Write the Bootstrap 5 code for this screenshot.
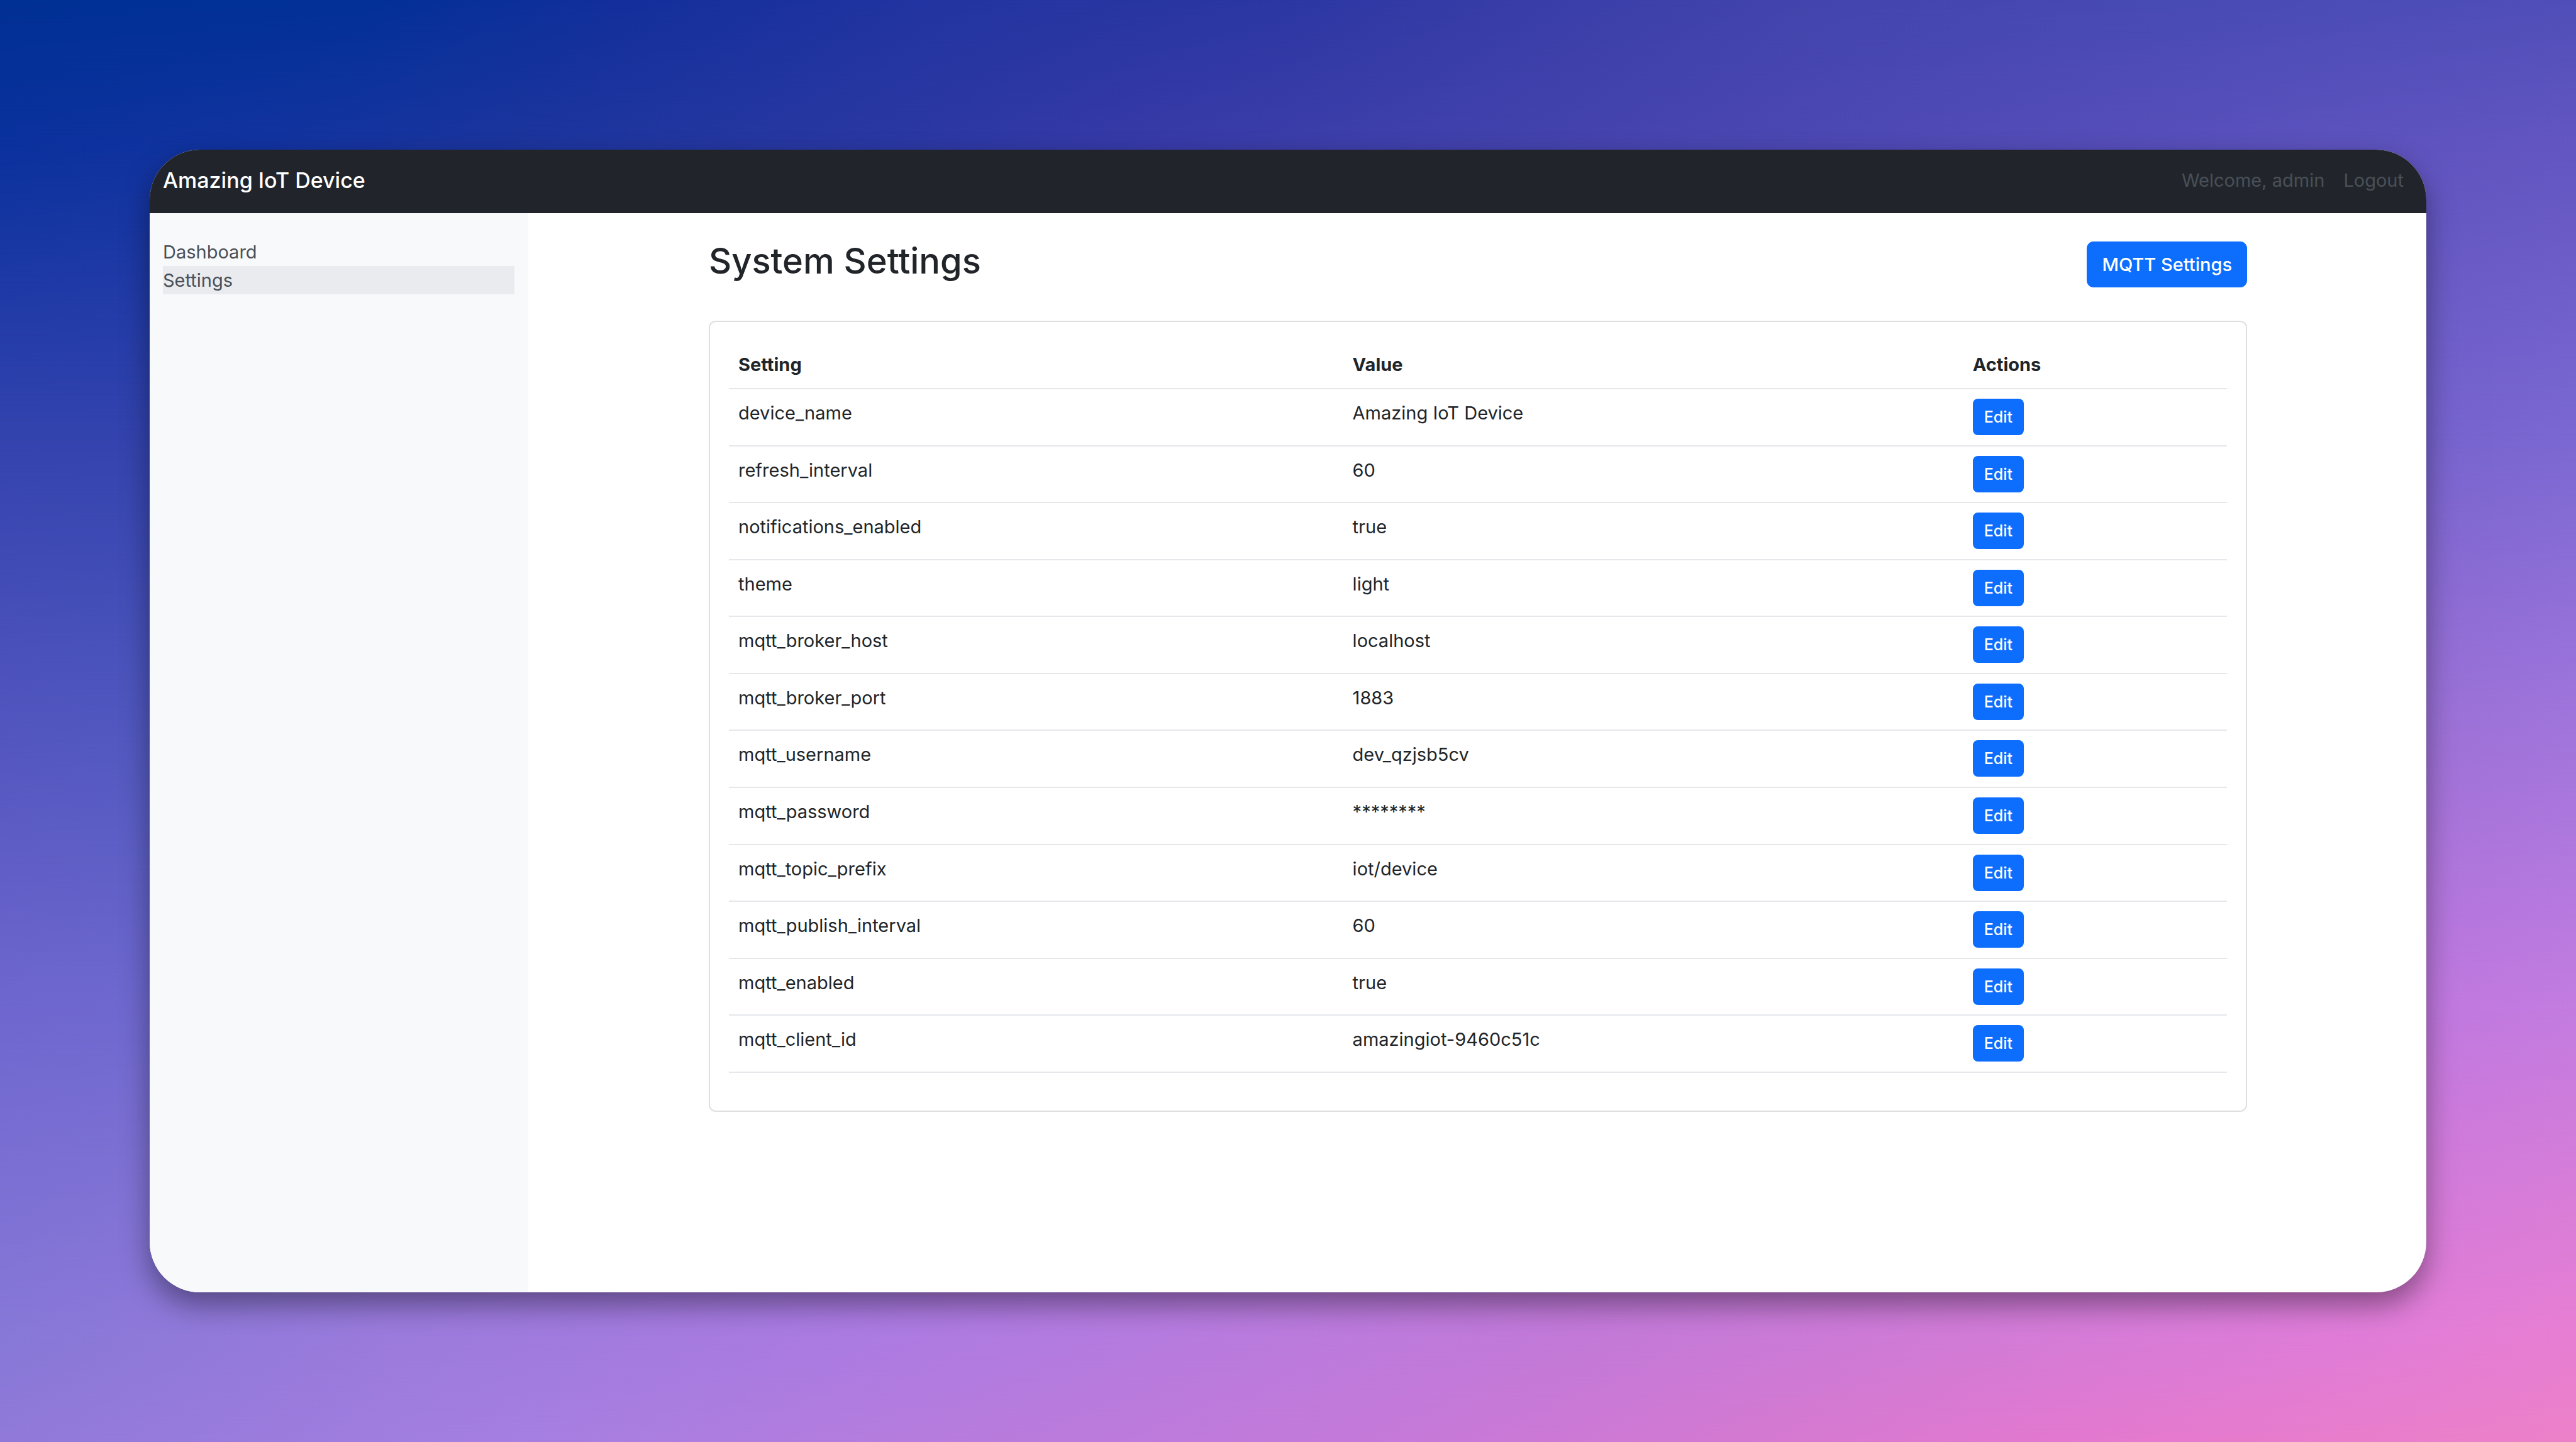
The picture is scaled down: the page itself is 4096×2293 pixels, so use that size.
<!DOCTYPE html>
<html lang="en">
<head>
<meta charset="utf-8">
<meta name="viewport" content="width=device-width, initial-scale=1">
<title>System Settings - Amazing IoT Device</title>
<link href="https://cdn.jsdelivr.net/npm/bootstrap@5.3.0/dist/css/bootstrap.min.css" rel="stylesheet">
<style>
:root { --bs-body-font-family: Inter, "Liberation Sans", sans-serif; }
body { font-family: Inter, "Liberation Sans", sans-serif; font-size: 29px; line-height: 45px; }

/* wallpaper: rows of colour, each faded into the next from top to bottom */
.stage { min-height: 100vh; background: #3a3ca8; }
.stage > * { grid-area: 1 / 1; }
.wash-0 { background: linear-gradient(90deg, #003094 0%, #023097 14%, #132f9b 24%, #2234a0 36%, #2c37a3 50%, #3a3ea8 60%, #4345ad 70%, #494bb5 85%, #504fb8 100%); }
.wash-1 { background: linear-gradient(90deg, #0a319d 0%, #1233a0 10%, #1c359d 20%, #2b38a3 35%, #373aa7 44%, #4443ad 60%, #504ab5 75%, #5c52bd 90%, #6356c2 100%);
  mask-image: linear-gradient(transparent 0%, #000 10%); -webkit-mask-image: linear-gradient(transparent 0%, #000 10%); }
.wash-2 { background: linear-gradient(90deg, #3343ae 0%, #3343ae 6%, #7663cd 94%, #7b68d2 100%);
  mask-image: linear-gradient(transparent 10%, #000 30%); -webkit-mask-image: linear-gradient(transparent 10%, #000 30%); }
.wash-3 { background: linear-gradient(90deg, #5255be 0%, #5058bf 6%, #9b71d6 94%, #a075dc 100%);
  mask-image: linear-gradient(transparent 30%, #000 50%); -webkit-mask-image: linear-gradient(transparent 30%, #000 50%); }
.wash-4 { background: linear-gradient(90deg, #6f67cf 0%, #6f69cf 6%, #c078df 94%, #c37ce0 100%);
  mask-image: linear-gradient(transparent 50%, #000 70%); -webkit-mask-image: linear-gradient(transparent 50%, #000 70%); }
.wash-5 { background: linear-gradient(90deg, #8778d7 0%, #9b7bdc 15%, #ac7be2 33%, #bb7bdd 50%, #c279d8 60%, #d07bd6 75%, #df7cd8 90%, #e87ed2 100%);
  mask-image: linear-gradient(transparent 70%, #000 93%); -webkit-mask-image: linear-gradient(transparent 70%, #000 93%); }
.wash-6 { background: linear-gradient(90deg, #9079d9 0%, #a57fe1 20%, #b57cdd 35%, #c679d8 55%, #d679d0 70%, #e378cf 80%, #ec81c8 100%);
  mask-image: linear-gradient(transparent 93%, #000 100%); -webkit-mask-image: linear-gradient(transparent 93%, #000 100%); }

.app-window { margin: 238px; border-radius: 80px; background: #fff; box-shadow: 0 20px 46px rgba(0, 0, 0, .4); }
.app-bar { min-height: 101px; padding: 0 36px 4px 21px; background: #21252b; }
.app-bar .navbar-brand { font-size: 34px; font-weight: 500; padding: 0; margin: 0; line-height: 56px; }
.app-bar .nav-link { color: #495057; }
.app-links { gap: 30px; }
.app-side { flex: 0 0 602px; padding: 39px 22px 0 21px; background: #f8f9fb; }
.app-side .nav-link { color: #495057; }
.app-side .nav-link.active { background: #eaebef; }
.page-box { max-width: 2492px; padding: 45px 22px 0 24px; }
.page-head { height: 126px; }
.page-head h1 { font-size: 56px; line-height: 62px; font-weight: 500; }
.btn { font-size: 29px; line-height: 45px; font-weight: 500; padding: 12px 22px; border-width: 2px; border-radius: 11px; background: #0d6efd; }
.card { border: 2px solid #dfdfdf; border-radius: 11px; }
.card-body { padding: 30px; }
.settings-table { height: 1164px; margin-bottom: 30px; --bs-table-color: #212529; }
.settings-table > :not(caption) > * > * { padding: 15px; border-bottom: 2px solid #e5e7eb; }
.settings-table .btn { font-size: 25px; line-height: 38px; padding: 8px 16px; border-radius: 8px; display: block; }
.col-key { width: 41%; }
.col-value { width: 41.4%; }
</style>
</head>
<body>
<div class="stage d-grid">
  <div class="wash-0"></div>
  <div class="wash-1"></div>
  <div class="wash-2"></div>
  <div class="wash-3"></div>
  <div class="wash-4"></div>
  <div class="wash-5"></div>
  <div class="wash-6"></div>
  <div class="app-window position-relative d-flex flex-column overflow-hidden">
    <nav class="app-bar navbar navbar-expand d-flex justify-content-between align-items-center">
      <a class="navbar-brand text-white" href="#">Amazing IoT Device</a>
      <div class="app-links navbar-nav">
        <span class="nav-link p-0">Welcome, admin</span>
        <a class="nav-link p-0" href="#">Logout</a>
      </div>
    </nav>
    <div class="d-flex flex-grow-1">
      <aside class="app-side">
        <nav class="nav flex-column">
          <a class="nav-link p-0" href="#">Dashboard</a>
          <a class="nav-link p-0 active" aria-current="page" href="#">Settings</a>
        </nav>
      </aside>
      <main class="flex-grow-1">
        <div class="page-box container-fluid">
          <div class="page-head d-flex justify-content-between align-items-start">
            <h1 class="mb-0">System Settings</h1>
            <button type="button" class="btn btn-primary">MQTT Settings</button>
          </div>
          <div class="card">
            <div class="card-body">
              <table class="settings-table table">
                <colgroup><col class="col-key"><col class="col-value"><col></colgroup>
                <thead>
                  <tr><th scope="col">Setting</th><th scope="col">Value</th><th scope="col">Actions</th></tr>
                </thead>
                <tbody>
                  <tr><td>device_name</td><td>Amazing IoT Device</td><td><button type="button" class="btn btn-primary btn-sm">Edit</button></td></tr>
                  <tr><td>refresh_interval</td><td>60</td><td><button type="button" class="btn btn-primary btn-sm">Edit</button></td></tr>
                  <tr><td>notifications_enabled</td><td>true</td><td><button type="button" class="btn btn-primary btn-sm">Edit</button></td></tr>
                  <tr><td>theme</td><td>light</td><td><button type="button" class="btn btn-primary btn-sm">Edit</button></td></tr>
                  <tr><td>mqtt_broker_host</td><td>localhost</td><td><button type="button" class="btn btn-primary btn-sm">Edit</button></td></tr>
                  <tr><td>mqtt_broker_port</td><td>1883</td><td><button type="button" class="btn btn-primary btn-sm">Edit</button></td></tr>
                  <tr><td>mqtt_username</td><td>dev_qzjsb5cv</td><td><button type="button" class="btn btn-primary btn-sm">Edit</button></td></tr>
                  <tr><td>mqtt_password</td><td>********</td><td><button type="button" class="btn btn-primary btn-sm">Edit</button></td></tr>
                  <tr><td>mqtt_topic_prefix</td><td>iot/device</td><td><button type="button" class="btn btn-primary btn-sm">Edit</button></td></tr>
                  <tr><td>mqtt_publish_interval</td><td>60</td><td><button type="button" class="btn btn-primary btn-sm">Edit</button></td></tr>
                  <tr><td>mqtt_enabled</td><td>true</td><td><button type="button" class="btn btn-primary btn-sm">Edit</button></td></tr>
                  <tr><td>mqtt_client_id</td><td>amazingiot-9460c51c</td><td><button type="button" class="btn btn-primary btn-sm">Edit</button></td></tr>
                </tbody>
              </table>
            </div>
          </div>
        </div>
      </main>
    </div>
  </div>
</div>
<script src="https://cdn.jsdelivr.net/npm/bootstrap@5.3.0/dist/js/bootstrap.bundle.min.js"></script>
</body>
</html>
